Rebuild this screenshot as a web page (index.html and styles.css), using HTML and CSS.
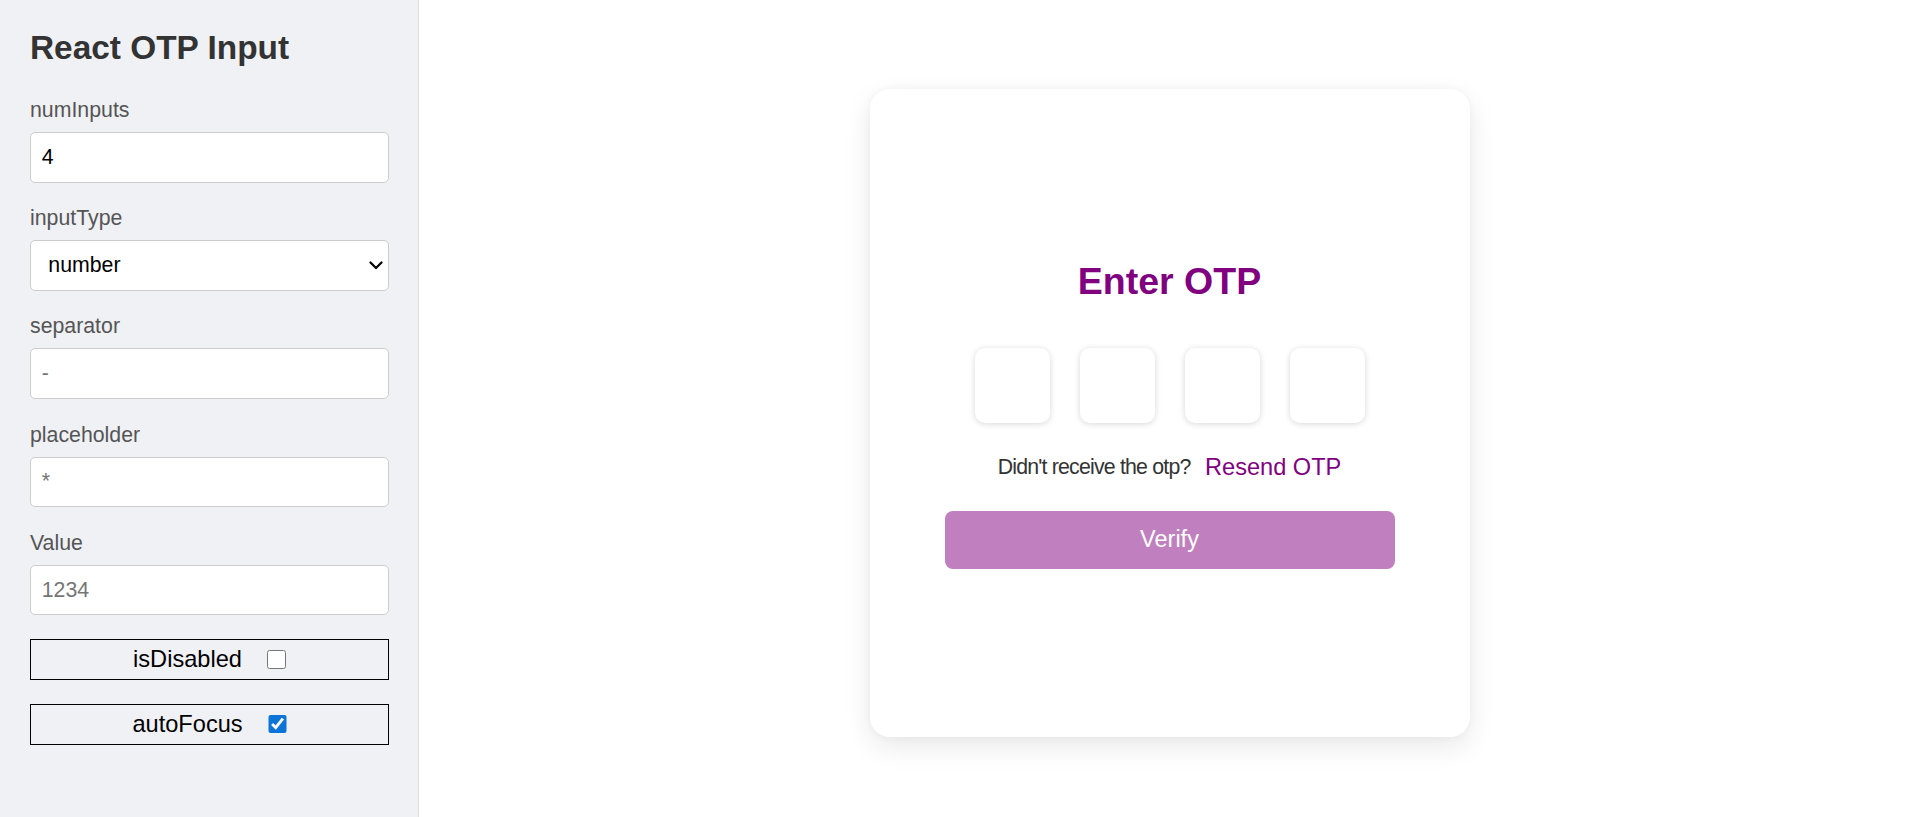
FILE: index.html
```html
<!DOCTYPE html>
<html lang="en">
<head>
<meta charset="utf-8">
<title>React OTP Input</title>
<link rel="stylesheet" href="styles.css">
</head>
<body>
<div class="app">
  <aside class="sidebar">
    <h1 class="title">React OTP Input</h1>
    <div class="form">
      <div class="field">
        <label class="label">numInputs</label>
        <input class="text-input" type="text" value="4">
      </div>
      <div class="field">
        <label class="label">inputType</label>
        <div class="select-wrap">
          <select class="text-input select-input">
            <option>number</option>
            <option>text</option>
            <option>password</option>
            <option>tel</option>
          </select>
          <svg class="chevron" width="14" height="9" viewBox="0 0 14 9" aria-hidden="true">
            <path d="M1.5 1.5 L7 7 L12.5 1.5" fill="none" stroke="#000" stroke-width="2.2" stroke-linecap="round" stroke-linejoin="round"/>
          </svg>
        </div>
      </div>
      <div class="field">
        <label class="label">separator</label>
        <input class="text-input" type="text" placeholder="-">
      </div>
      <div class="field">
        <label class="label">placeholder</label>
        <input class="text-input" type="text" placeholder="*">
      </div>
      <div class="field">
        <label class="label">Value</label>
        <input class="text-input" type="text" placeholder="1234">
      </div>
      <label class="check-box"><span>isDisabled</span><input class="check" type="checkbox"></label>
      <label class="check-box"><span>autoFocus</span><input class="check" type="checkbox" checked></label>
    </div>
  </aside>
  <main class="main">
    <div class="card">
      <h2 class="otp-title">Enter OTP</h2>
      <div class="otp-row">
        <input class="otp-box" type="text" maxlength="1">
        <input class="otp-box" type="text" maxlength="1">
        <input class="otp-box" type="text" maxlength="1">
        <input class="otp-box" type="text" maxlength="1">
      </div>
      <div class="resend-row">
        <span class="resend-text">Didn't receive the otp?</span>
        <button class="resend-btn" type="button">Resend OTP</button>
      </div>
      <button class="verify-btn" type="button">Verify</button>
    </div>
  </main>
</div>
</body>
</html>
```

FILE: styles.css
```css
* {
  box-sizing: border-box;
}

html, body {
  margin: 0;
  padding: 0;
  height: 100%;
}

body {
  font-family: "Liberation Sans", Arial, sans-serif;
  background: #ffffff;
  color: #333;
}

.app {
  display: flex;
  height: 100vh;
}

.sidebar {
  width: 419px;
  flex: 0 0 419px;
  background: #f0f1f5;
  border-right: 1px solid #dcdde1;
  padding: 29.2px 29px 0 30px;
}

.title {
  margin: 0 0 30.8px;
  font-size: 33.4px;
  font-weight: 700;
  line-height: normal;
  color: #333;
}

.form {
  display: flex;
  flex-direction: column;
  gap: 23.6px;
}

.field {
  display: flex;
  flex-direction: column;
}

.label {
  display: block;
  font-size: 21.3px;
  line-height: 24.5px;
  color: #555;
  margin-bottom: 9.5px;
}

.text-input {
  width: 100%;
  height: 50.6px;
  border: 1px solid #cccccc;
  border-radius: 5px;
  background: #ffffff;
  padding: 0 10.7px;
  font-family: "Liberation Sans", Arial, sans-serif;
  font-size: 21.3px;
  color: #000;
  outline: none;
}

.text-input::placeholder {
  color: #757575;
}

.select-wrap {
  position: relative;
}

.select-input {
  appearance: none;
  -webkit-appearance: none;
  padding-left: 17.3px;
  padding-right: 30px;
}

.chevron {
  position: absolute;
  right: 6px;
  top: 21px;
  pointer-events: none;
}

.check-box {
  display: flex;
  justify-content: center;
  align-items: center;
  gap: 25.3px;
  height: 41px;
  border: 1px solid #000;
  font-size: 23.6px;
  color: #000;
}

.check {
  width: 18.7px;
  height: 18.7px;
  margin: 0;
  accent-color: #0b74d6;
}

.main {
  flex: 1;
  display: flex;
  justify-content: center;
  align-items: center;
  padding-top: 9px;
}

.card {
  width: 600px;
  height: 648px;
  background: #ffffff;
  border-radius: 20px;
  box-shadow: 0 10px 28px rgba(0, 0, 0, 0.09), 0 0 10px rgba(0, 0, 0, 0.035);
  display: flex;
  flex-direction: column;
  align-items: center;
  padding-top: 170.8px;
}

.otp-title {
  margin: 0 0 45.2px;
  font-size: 37.5px;
  line-height: 43px;
  font-weight: 700;
  color: #800080;
}

.otp-row {
  display: flex;
  gap: 30px;
}

.otp-box {
  width: 75px;
  height: 75px;
  border: none;
  border-radius: 10px;
  background: #ffffff;
  box-shadow: 0 1px 6px rgba(0, 0, 0, 0.16);
  font-family: "Liberation Sans", Arial, sans-serif;
  font-size: 24px;
  text-align: center;
  outline: none;
}

.resend-row {
  display: flex;
  align-items: center;
  gap: 14.5px;
  margin-top: 30.5px;
  height: 27.1px;
}

.resend-text {
  font-size: 21.3px;
  letter-spacing: -0.8px;
  color: #333;
  line-height: 24.5px;
}

.resend-btn {
  border: none;
  background: none;
  padding: 0;
  font-family: "Liberation Sans", Arial, sans-serif;
  font-size: 23.6px;
  line-height: normal;
  color: #800080;
  cursor: pointer;
}

.verify-btn {
  margin-top: 30.4px;
  width: 450px;
  height: 58px;
  border: none;
  border-radius: 8px;
  background: #c080c0;
  color: #ffffff;
  font-family: "Liberation Sans", Arial, sans-serif;
  font-size: 23.5px;
  cursor: pointer;
}
```
